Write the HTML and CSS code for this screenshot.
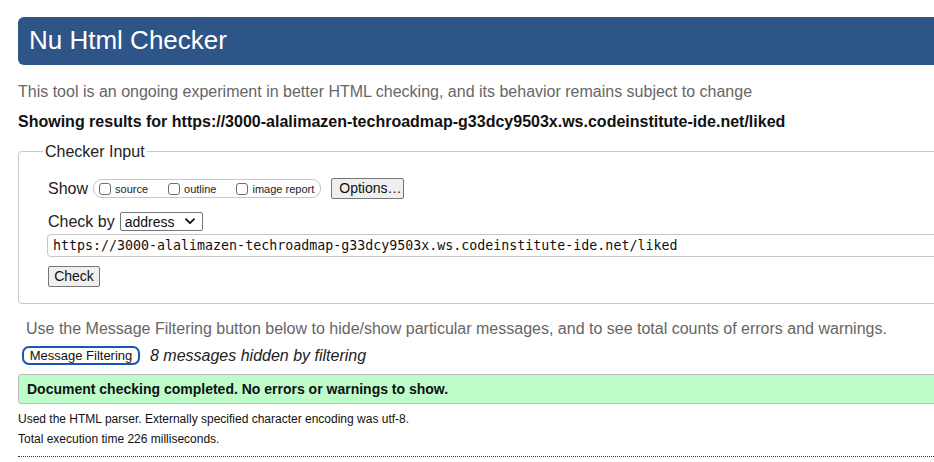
FILE: index.html
```html
<!DOCTYPE html>
<html lang="en">
<head>
<meta charset="utf-8">
<title>Nu Html Checker</title>
<link rel="stylesheet" href="styles.css">
</head>
<body>
<div class="page">
  <h1 class="title">Nu Html Checker</h1>
  <p class="intro">This tool is an ongoing experiment in better HTML checking, and its behavior remains subject to change</p>
  <p class="results">Showing results for https://3000-alalimazen-techroadmap-g33dcy9503x.ws.codeinstitute-ide.net/liked</p>

  <form class="checker">
    <fieldset class="checker-set">
      <legend class="checker-legend">Checker Input</legend>
      <div class="row show-row">
        <span class="row-label">Show</span>
        <span class="show-group">
          <label class="opt"><input type="checkbox" class="box"><span>source</span></label>
          <label class="opt"><input type="checkbox" class="box"><span>outline</span></label>
          <label class="opt"><input type="checkbox" class="box"><span>image report</span></label>
        </span>
        <button type="button" class="btn options-btn">Options…</button>
      </div>
      <div class="row checkby-row">
        <span class="row-label">Check by</span>
        <span class="select-wrap">
          <select class="select"><option>address</option></select>
          <svg class="chevron" width="10" height="7" viewBox="0 0 10 7"><path d="M1 1.2 L5 5.2 L9 1.2" fill="none" stroke="#111" stroke-width="1.8" stroke-linecap="round" stroke-linejoin="round"/></svg>
        </span>
      </div>
      <input class="url" type="text" value="https://3000-alalimazen-techroadmap-g33dcy9503x.ws.codeinstitute-ide.net/liked">
      <div class="row submit-row">
        <button type="button" class="btn check-btn">Check</button>
      </div>
    </fieldset>
  </form>

  <p class="filter-note">Use the Message Filtering button below to hide/show particular messages, and to see total counts of errors and warnings.</p>
  <div class="filter-row">
    <button type="button" class="filter-btn">Message Filtering</button>
    <em class="hidden-count">8 messages hidden by filtering</em>
  </div>
  <div class="success">Document checking completed. No errors or warnings to show.</div>
  <p class="details first">Used the HTML parser. Externally specified character encoding was utf-8.</p>
  <p class="details">Total execution time 226 milliseconds.</p>
  <hr class="dotted">
</div>
</body>
</html>
```

FILE: styles.css
```css
html, body {
  margin: 0;
  padding: 0;
  background: #fff;
  overflow: hidden;
}

body {
  font-family: "Liberation Sans", Arial, sans-serif;
  color: #111;
}

.page {
  width: 1200px;
  padding: 17px 0 0 18px;
}

.title {
  margin: 0;
  height: 48px;
  line-height: 46px;
  padding-left: 11px;
  background: #2d5587;
  color: #fff;
  font-weight: normal;
  font-size: 26px;
  border-radius: 6px 0 0 6px;
}

.intro {
  margin: 17px 0 0;
  font-size: 16px;
  line-height: 20px;
  color: #666;
}

.results {
  margin: 10px 0 0;
  font-size: 16px;
  line-height: 19px;
  font-weight: bold;
  color: #111;
}

.checker {
  margin: 11px 0 0;
}

.checker-set {
  margin: 0;
  padding: 17px 0 16px 29px;
  border: 1px solid #c8c8c8;
  border-radius: 4px;
}

.checker-legend {
  margin-left: -5px;
  padding: 0 2px;
  font-size: 16px;
  line-height: 19px;
  color: #222;
}

.row {
  display: flex;
  align-items: center;
}

.row-label {
  font-size: 16px;
  color: #222;
}

.show-row {
  height: 21px;
}

.show-group {
  display: inline-flex;
  align-items: center;
  height: 17px;
  margin-left: 5px;
  padding: 0 6px 0 5px;
  border: 1px solid #c6c6c6;
  border-radius: 9px;
}

.opt {
  display: inline-flex;
  align-items: center;
  font-size: 11px;
  color: #222;
  margin-right: 20px;
}

.opt:last-child {
  margin-right: 0;
}

.box {
  appearance: none;
  -webkit-appearance: none;
  width: 12px;
  height: 12px;
  margin: 0 4px 0 0;
  border: 1px solid #6e6e6e;
  border-radius: 3px;
  background: #fff;
}

.btn {
  font-family: "Liberation Sans", Arial, sans-serif;
  font-size: 14px;
  color: #111;
  background: #efefef;
  border: 1px solid #767676;
  border-radius: 2px;
  padding: 0 7px;
  height: 21px;
  line-height: 19px;
}

.options-btn {
  margin-left: 10px;
  width: 73px;
}

.checkby-row {
  margin-top: 13px;
  height: 19px;
}

.select-wrap {
  position: relative;
  display: inline-block;
  margin-left: 5px;
}

.select {
  appearance: none;
  -webkit-appearance: none;
  width: 83px;
  height: 19px;
  font-family: "Liberation Sans", Arial, sans-serif;
  font-size: 14px;
  color: #111;
  padding: 0 0 0 4px;
  border: 1px solid #767676;
  border-radius: 2px;
  background: #fff;
  display: block;
}

.chevron {
  position: absolute;
  right: 8px;
  top: 6px;
}

.url {
  display: block;
  box-sizing: border-box;
  width: 1200px;
  height: 23px;
  margin: 3px 0 0 -1px;
  padding: 0 5px;
  font-family: "DejaVu Sans Mono", "Liberation Mono", monospace;
  font-size: 13.3px;
  color: #111;
  border: 1px solid #c6c6c6;
  border-radius: 4px;
  background: #fff;
}

.submit-row {
  margin-top: 9px;
}

.check-btn {
  width: 52px;
  padding: 0;
}

.filter-note {
  margin: 15px 0 0;
  padding-left: 8px;
  font-size: 16px;
  line-height: 20px;
  color: #666;
}

.filter-row {
  display: flex;
  align-items: center;
  margin-top: 7px;
  padding-left: 4px;
}

.filter-btn {
  box-sizing: border-box;
  width: 118px;
  height: 19px;
  padding: 0;
  font-family: "Liberation Sans", Arial, sans-serif;
  font-size: 13px;
  color: #111;
  background: #fff;
  border: 2px solid #1a56b8;
  border-radius: 7px;
  line-height: 15px;
}

.hidden-count {
  margin-left: 10px;
  font-size: 16px;
  color: #222;
}

.success {
  margin-top: 9px;
  height: 28px;
  line-height: 28px;
  padding-left: 8px;
  background: #bdfdca;
  border: 1px solid #bcbcbc;
  border-radius: 3px 0 0 3px;
  font-size: 14px;
  font-weight: bold;
  color: #111;
}

.details {
  margin: 5px 0 0;
  font-size: 12px;
  line-height: 15px;
  color: #111;
}

.details.first {
  margin-top: 8px;
}

.dotted {
  margin: 9px 0 0;
  border: 0;
  border-top: 1px dotted #333;
  height: 0;
}
```
